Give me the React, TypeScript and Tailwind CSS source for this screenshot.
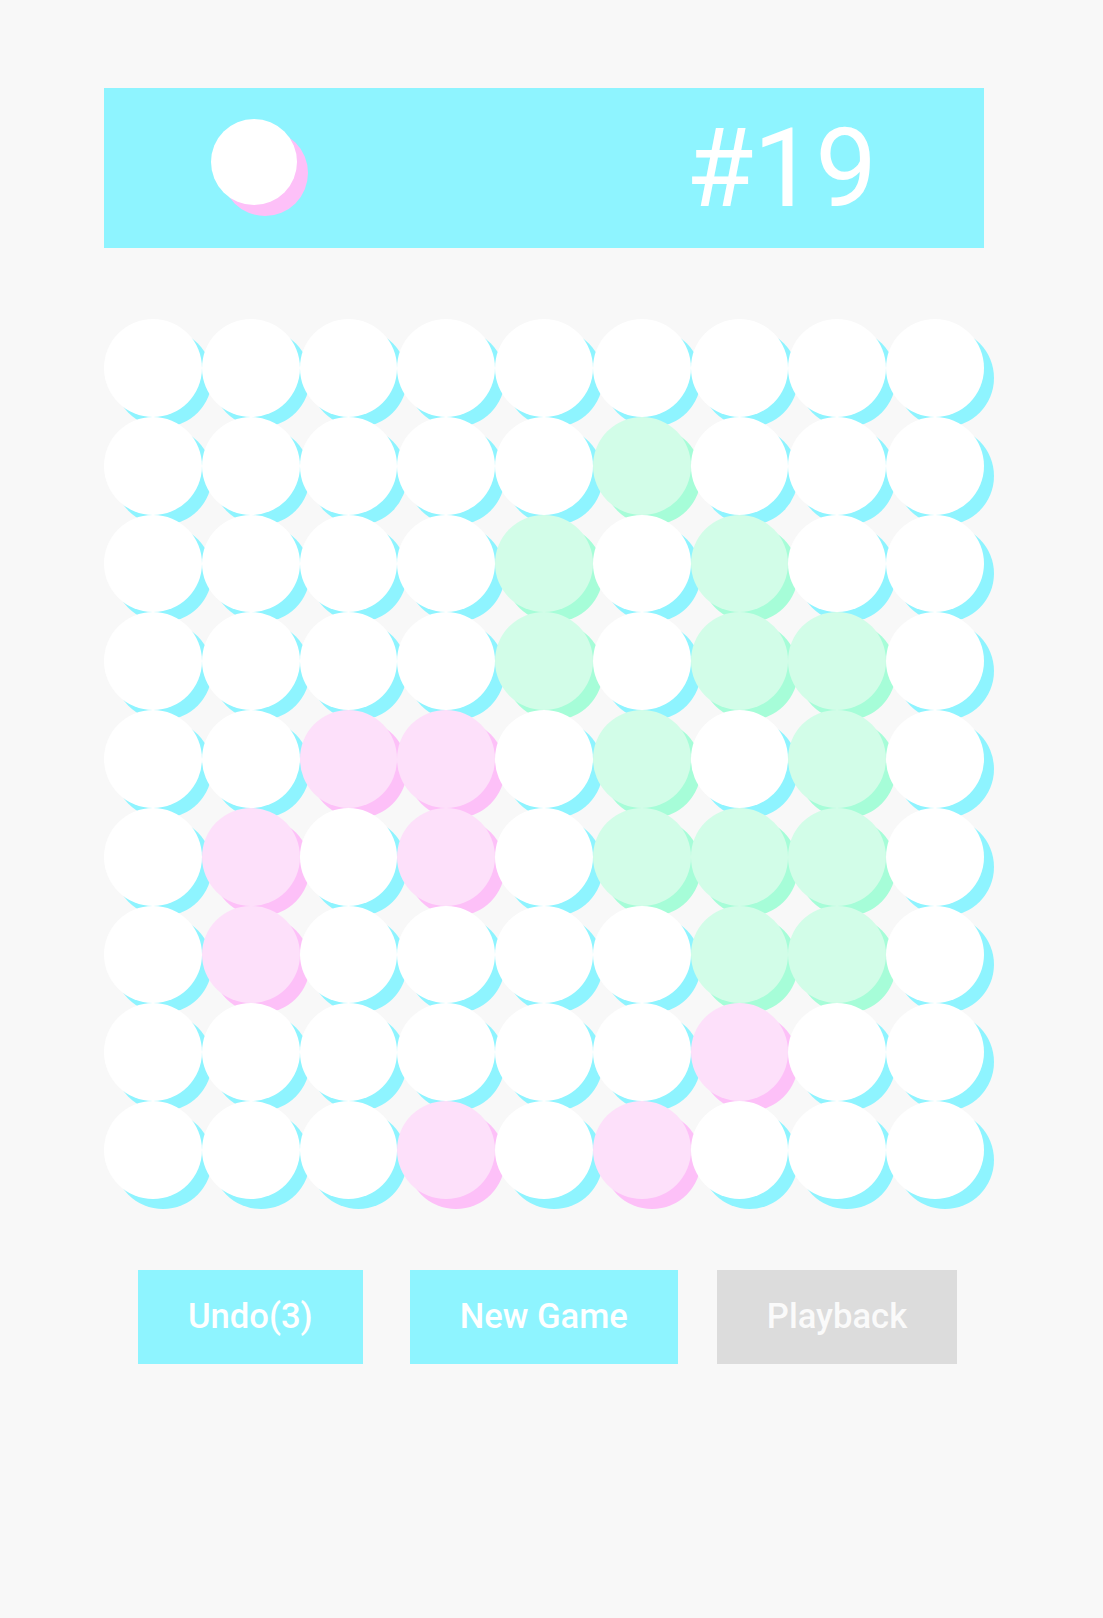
import React from "react";

// 0 = empty, 1 = green, 2 = pink
const board = [
  "000000000",
  "000001000",
  "000010100",
  "000010110",
  "002201010",
  "020201110",
  "020000110",
  "000000200",
  "000202000",
];

const styles: Record<string, { fill: string; shadow: string }> = {
  "0": { fill: "bg-white", shadow: "bg-[#8ef4ff]" },
  "1": { fill: "bg-[#d2fde8]", shadow: "bg-[#a6fdd8]" },
  "2": { fill: "bg-[#fde0fa]", shadow: "bg-[#fdc0f8]" },
};

const Cell: React.FC<{ kind: string }> = ({ kind }) => {
  const s = styles[kind];
  return (
    <div className="relative aspect-square">
      <div className={`absolute inset-0 translate-x-[10px] translate-y-[10px] rounded-full ${s.shadow}`} />
      <div className={`absolute inset-0 rounded-full ${s.fill}`} />
    </div>
  );
};

const App: React.FC = () => {
  return (
    <div
      className="min-h-screen bg-[#f8f8f8] pl-[104px] pt-[88px]"
      style={{ fontFamily: "Roboto, 'Noto Sans', sans-serif" }}
    >
      <div className="w-[880px]">
        {/* Header: next piece + move number */}
        <div className="flex h-[160px] items-center justify-between bg-[#8ef4ff] pl-[107px] pr-[107px]">
          <div className="relative mb-[12px] h-[86px] w-[86px]">
            <div className="absolute inset-0 translate-x-[11px] translate-y-[11px] rounded-full bg-[#fdc0f8]" />
            <div className="absolute inset-0 rounded-full bg-white" />
          </div>
          <span className="mt-[2px] text-[110px] font-normal leading-none text-white">#19</span>
        </div>

        {/* Board */}
        <div className="mt-[71px] grid grid-cols-9">
          {board.map((row, r) =>
            row.split("").map((k, c) => <Cell key={`${r}-${c}`} kind={k} />)
          )}
        </div>

        {/* Actions */}
        <div className="mt-[71px] flex pl-[34px]">
          <button className="h-[94px] bg-[#8ef4ff] px-[50px] text-[34.6px] font-medium text-white">
            Undo(3)
          </button>
          <button className="ml-[47px] h-[94px] bg-[#8ef4ff] px-[50px] text-[34.6px] font-medium text-white">
            New Game
          </button>
          <button className="ml-[39px] h-[94px] bg-[#dcdcdc] px-[50px] text-[34.6px] font-medium text-[#fafafa]">
            Playback
          </button>
        </div>
      </div>
    </div>
  );
};

export default App;
